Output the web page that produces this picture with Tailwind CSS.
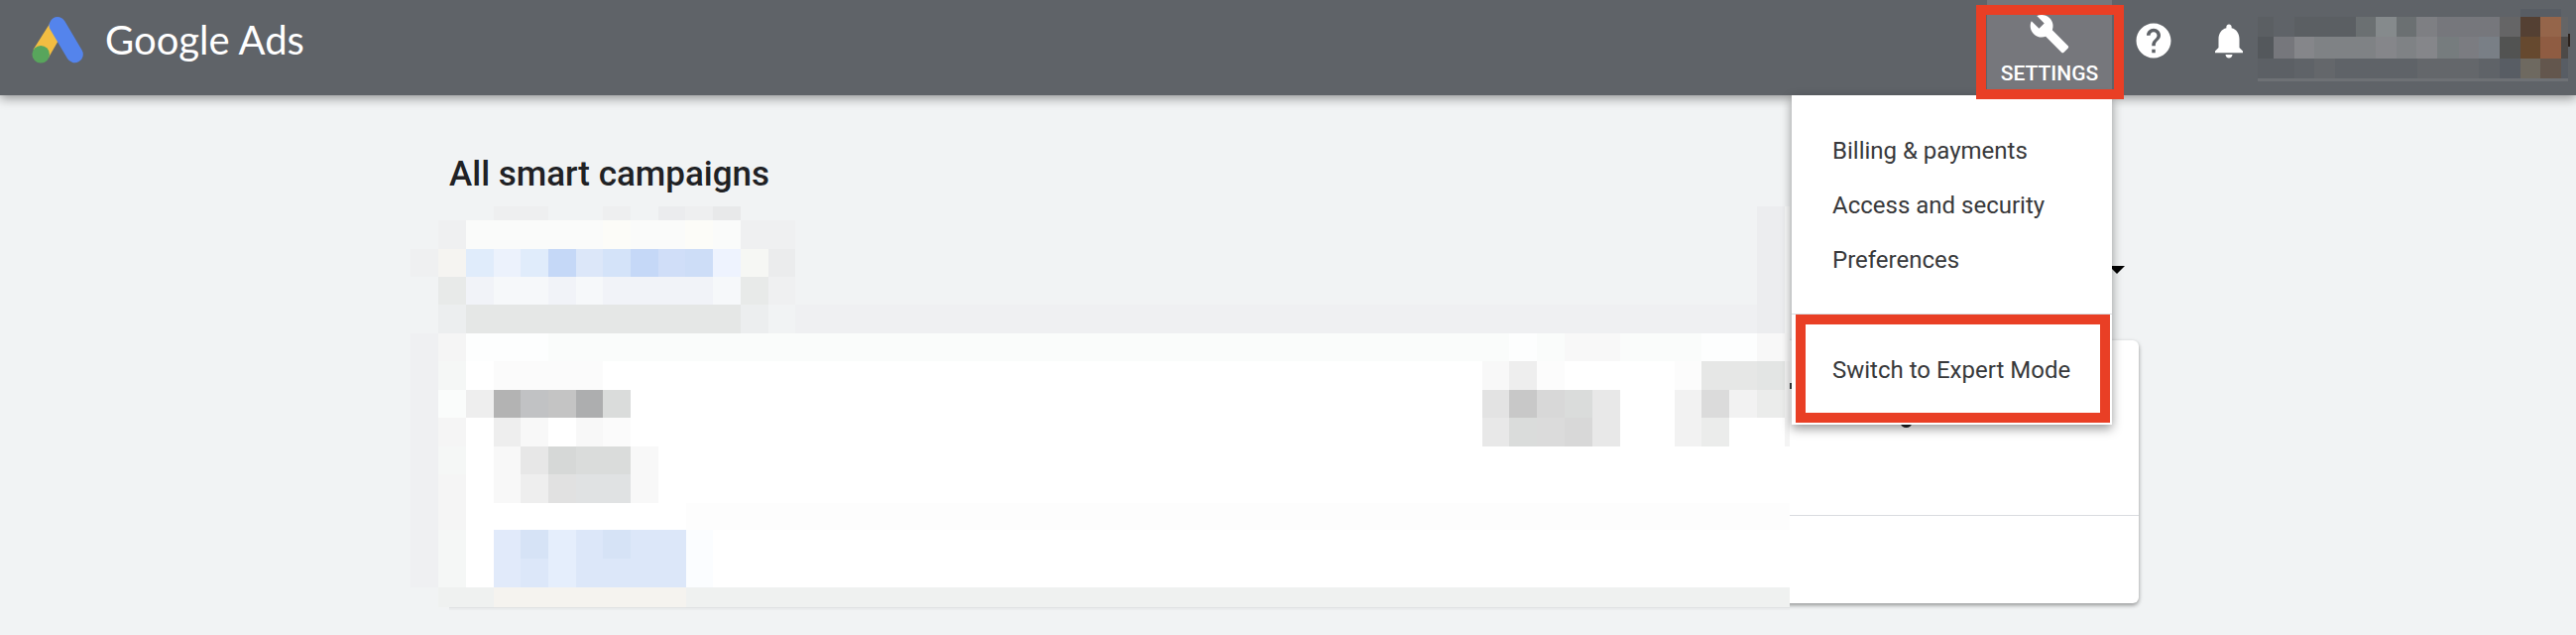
<!DOCTYPE html>
<html lang="en">
<head>
    <meta charset="UTF-8">
    <meta name="viewport" content="width=device-width, initial-scale=1.0">
    <title>Google Ads</title>
    <script src="https://cdn.jsdelivr.net/npm/@tailwindcss/browser@4"></script>
</head>
<body class="bg-[#f1f3f4] min-h-screen overflow-x-hidden font-['Roboto',sans-serif] text-[#202124]">
    <header class="relative z-20 flex h-24 items-start justify-between bg-[#5f6368] pl-8 pr-1.5 shadow-[0_3px_10px_rgba(0,0,0,0.4)]">
        <a href="#" class="flex items-start gap-5 pt-4 text-white">
            <svg class="h-12 w-[54px]" viewBox="32 16 54 48" aria-hidden="true">
                <path d="M50 24 L33.500 50 L49 58 L64 32 Z" fill="#f2bd42"/>
                <path d="M58 25.500 L75.300 54.800" stroke="#5484ec" stroke-width="17" stroke-linecap="round"/>
                <circle cx="41.200" cy="54.700" r="8.800" fill="#58a55c"/>
            </svg>
            <span class="font-['Lato',sans-serif] text-[40px] leading-12">Google Ads</span>
        </a>

        <div class="flex items-start">
            <div class="relative mr-[21px]">
                <button type="button" class="flex h-24 w-[126px] flex-col items-center bg-[#76777c] pt-[13px] text-white">
                    <svg class="size-[42px]" viewBox="0 0 24 24" fill="currentColor" aria-hidden="true">
                        <path d="M22.7 19l-9.1-9.1c.9-2.3.4-5-1.5-6.9-2-2-5-2.400-7.400-1.300L9 6 6 9 1.600 4.700C.4 7.100.9 10.100 2.900 12.100c1.900 1.900 4.600 2.400 6.900 1.500l9.100 9.100c.4.4 1 .4 1.400 0l2.300-2.300c.5-.4.5-1.100.1-1.400z"/>
                    </svg>
                    <span class="mt-[7px] text-[21px] leading-6 font-medium">SETTINGS</span>
                </button>

                <!-- settings menu -->
                <nav class="absolute top-24 right-0 w-[323px] bg-white text-[24px] text-[#38393b] shadow-[0_4px_10px_rgba(0,0,0,0.4)]">
                    <ul class="pt-[29px] pb-[26px] leading-[55px]">
                        <li><a href="#" class="block px-[41px]">Billing &amp; payments</a></li>
                        <li><a href="#" class="block px-[41px]">Access and security</a></li>
                        <li><a href="#" class="block px-[41px]">Preferences</a></li>
                    </ul>
                    <div class="relative border-t border-[#dadce0] pt-[29px] pb-[27px]">
                        <a href="#" class="block px-[41px] leading-[55px]">Switch to Expert Mode</a>
                        <div class="pointer-events-none absolute top-0 right-[2px] bottom-[2px] left-1 border-10 border-[#e93f25]"></div>
                    </div>
                </nav>
                <div class="pointer-events-none absolute -left-[11px] -right-3 top-[5px] -bottom-1 border-10 border-[#e93f25]"></div>
            </div>

            <button type="button" aria-label="Help" class="mt-5 mr-8.5 text-white">
                <svg class="size-[42px]" viewBox="0 0 24 24" fill="currentColor">
                    <path d="M12 2C6.480 2 2 6.480 2 12s4.480 10 10 10 10-4.480 10-10S17.520 2 12 2zm1 17h-2v-2h2v2zm2.070-7.750l-.9.920C13.450 12.900 13 13.500 13 15h-2v-.5c0-1.100.450-2.100 1.170-2.830l1.240-1.260c.370-.360.590-.860.590-1.410 0-1.100-.9-2-2-2s-2 .9-2 2H8c0-2.210 1.790-4 4-4s4 1.790 4 4c0 .880-.360 1.680-.930 2.250z"/>
                </svg>
            </button>
            <button type="button" aria-label="Notifications" class="mt-5 mr-2 text-white">
                <svg class="size-[42px]" viewBox="0 0 24 24" fill="currentColor">
                    <path d="M12 22c1.100 0 2-.9 2-2h-4c0 1.100.890 2 2 2zm6-6v-5c0-3.070-1.640-5.640-4.500-6.320V4c0-.830-.670-1.500-1.500-1.500s-1.500.670-1.500 1.500v.680C7.630 5.360 6 7.920 6 11v5l-2 2v1h16v-1l-2-2z"/>
                </svg>
            </button>

            <!-- account details, pixelated -->
            <svg class="mt-2 h-[74px] w-[315px]" viewBox="2277 8 315 74" shape-rendering="crispEdges" aria-hidden="true">
                <path fill="#5b5f63" d="M2277 17h16v20h-16zM2314 17h62v20h-62z"/>
                <path fill="#54585c" d="M2277 37h16v22h-16z"/>
                <path fill="#5c6065" d="M2277 59h37v20h-37z"/>
                <path fill="#64676b" d="M2334 59h21v20h-21zM2438 59h62v20h-62z"/>
                <path fill="#6b7072" d="M2376 17h20v20h-20zM2417 17h20v20h-20z"/>
                <path fill="#858a8c" d="M2396 17h21v20h-21z"/>
                <path fill="#7e7f83" d="M2437 17h21v20h-21z"/>
                <path fill="#76777c" d="M2458 17h63v20h-63zM2293 37h21v22h-21z"/>
                <path fill="#85868a" d="M2314 37h20v22h-20zM2396 37h21v22h-21zM2437 37h21v22h-21z"/>
                <path fill="#7f8285" d="M2334 37h62v22h-62zM2417 37h20v22h-20z"/>
                <path fill="#767c7e" d="M2458 37h22v22h-22z"/>
                <path fill="#7b7c81" d="M2480 37h20v22h-20z"/>
                <path fill="#797f86" d="M2500 37h21v22h-21z"/>
                <path fill="#656566" d="M2521 17h21v20h-21zM2583 17h7v20h-7z"/>
                <path fill="#525352" d="M2521 37h21v22h-21z"/>
                <path fill="#585d64" d="M2521 59h21v20h-21zM2542 9h41v8h-41zM2583 59h7v20h-7z"/>
                <path fill="#544033" d="M2542 17h20v20h-20z"/>
                <path fill="#66492f" d="M2542 37h20v22h-20z"/>
                <path fill="#6e6960" d="M2542 59h20v20h-20z"/>
                <path fill="#95654a" d="M2562 17h21v20h-21z"/>
                <path fill="#8f5c42" d="M2562 37h21v22h-21z"/>
                <path fill="#63564d" d="M2562 59h21v20h-21z"/>
                <path fill="#4d4a48" d="M2583 37h7v22h-7z"/>
                <path fill="#2b211c" d="M2590 34h2v13h-2z"/>
                <path fill="#6e7175" d="M2277 79h313v3h-313z"/>
            </svg>
        </div>
    </header>

    <main class="relative mx-auto max-w-[1716px] pt-15">
        <h1 class="pl-3 text-[35px] leading-10 font-medium">All smart campaigns</h1>
        <div class="flex h-[147px] items-end justify-end pr-3.5 pb-[67px]">
            <button type="button" aria-label="Open filter">
                <svg class="h-2 w-4" viewBox="0 0 16 8" aria-hidden="true"><path d="M0 0h16l-8 8z"/></svg>
            </button>
        </div>
        <section class="rounded-md bg-white shadow-[0_2px_4px_rgba(0,0,0,0.4)]">
            <div class="flex h-[177px] items-start justify-end border-b border-[#dadce0] pt-20 pr-[229px]">
                <svg class="h-2 w-[11px]" viewBox="0 0 11 8" aria-hidden="true"><ellipse cx="5.500" cy="4" rx="5.500" ry="4" fill="#202124"/></svg>
            </div>
            <div class="h-[88px]"></div>
        </section>

        <!-- pixelated campaign data -->
        <svg class="absolute top-[112px] -left-[27px] h-[408px] w-[1393px]" viewBox="414 208 1393 408" shape-rendering="crispEdges" aria-hidden="true">
            <!-- page behind the pixelated card edge -->
            <path fill="#f1f3f4" d="M414 592h28v24h-28zM442 608h1363v8h-1363z"/>
            <path fill="#fff" d="M442 336h1363v256h-1363z"/>

            <!-- top button -->
            <path fill="#eeeff0" d="M498 208h55v14h-55zM608 208h28v14h-28zM691 208h28v14h-28z"/>
            <path fill="#ebecee" d="M664 208h27v14h-27z"/>
            <path fill="#e8e9ea" d="M719 208h28v14h-28z"/>
            <path fill="#eff0f1" d="M442 222h28v29h-28zM747 222h55v29h-55zM414 251h28v28h-28zM775 279h27v28h-27z"/>
            <path fill="#fafbfa" d="M470 222h277v29h-277z"/>
            <path fill="#fcfcf8" d="M608 222h28v29h-28zM691 222h28v29h-28z"/>
            <path fill="#f5f4f1" d="M442 251h28v28h-28z"/>
            <path fill="#f6f7f4" d="M747 251h28v28h-28z"/>
            <path fill="#ebeced" d="M775 251h27v28h-27z"/>
            <path fill="#e0ecfb" d="M470 251h28v28h-28zM525 251h28v28h-28z"/>
            <path fill="#ecf2fc" d="M498 251h27v28h-27z"/>
            <path fill="#c5d8f7" d="M553 251h28v28h-28zM636 251h28v28h-28z"/>
            <path fill="#dce7f9" d="M581 251h27v28h-27z"/>
            <path fill="#d4e3f9" d="M608 251h28v28h-28z"/>
            <path fill="#d0def8" d="M664 251h27v28h-27z"/>
            <path fill="#cdddf7" d="M691 251h28v28h-28z"/>
            <path fill="#eef3fe" d="M719 251h28v28h-28z"/>
            <path fill="#e8eae9" d="M442 279h28v28h-28zM747 279h28v28h-28z"/>
            <path fill="#f1f3f8" d="M470 279h277v28h-277z"/>
            <path fill="#f6f8fa" d="M498 279h55v28h-55zM581 279h27v28h-27zM719 279h28v28h-28z"/>
            <path fill="#eceeef" d="M442 307h28v29h-28zM747 307h28v29h-28z"/>
            <path fill="#e5e7e6" d="M470 307h277v29h-277z"/>
            <path fill="#eff0f2" d="M802 307h970v29h-970z"/>

            <!-- right hand column above the card -->
            <path fill="#ecedef" d="M1772 208h28v128h-28z"/>
            <path fill="#f8f9f9" d="M1800 208h5v128h-5z"/>

            <!-- card edge -->
            <path fill="#eff0f2" d="M414 336h28v256h-28z"/>
            <path fill="#f5f5f5" d="M442 336h28v256h-28z"/>
            <path fill="#f5f7f6" d="M442 364h28v29h-28zM442 450h28v28h-28zM442 534h28v58h-28z"/>
            <path fill="#fafcfb" d="M442 393h28v28h-28zM553 336h1252v28h-1252z"/>
            <path fill="#fdfefe" d="M470 336h83v28h-83zM1522 336h28v28h-28zM1716 336h56v28h-56z"/>
            <path fill="#f8f8f8" d="M1578 336h56v28h-56zM1772 336h33v28h-33z"/>

            <!-- name and status -->
            <path fill="#fbfbfb" d="M498 364h110v29h-110z"/>
            <path fill="#eee" d="M470 393h28v28h-28zM498 421h27v29h-27zM525 478h28v29h-28z"/>
            <path fill="#b3b3b3" d="M498 393h27v28h-27z"/>
            <path fill="#c1c2c4" d="M525 393h28v28h-28z"/>
            <path fill="#c4c4c4" d="M553 393h28v28h-28z"/>
            <path fill="#adaeaf" d="M581 393h27v28h-27z"/>
            <path fill="#dadcdb" d="M608 393h28v28h-28zM553 450h83v28h-83z"/>
            <path fill="#f8f8f8" d="M525 421h28v29h-28zM581 421h27v29h-27zM498 450h27v57h-27zM636 450h28v57h-28z"/>
            <path fill="#fbfbfb" d="M608 421h28v29h-28z"/>
            <path fill="#e7e7e7" d="M525 450h28v28h-28z"/>
            <path fill="#d6d8d7" d="M553 450h28v28h-28z"/>
            <path fill="#e1e1e1" d="M553 478h28v29h-28z"/>
            <path fill="#e0e2e3" d="M581 478h55v29h-55z"/>
            <path fill="#fdfdfd" d="M692 507h1113v27h-1113z"/>

            <!-- link -->
            <path fill="#dce7f9" d="M498 534h194v58h-194z"/>
            <path fill="#e1eafa" d="M498 534h27v58h-27z"/>
            <path fill="#d6e3f6" d="M525 534h28v29h-28zM608 534h28v29h-28z"/>
            <path fill="#e5eefc" d="M553 534h28v58h-28z"/>
            <path fill="#fbfdff" d="M692 534h27v58h-27z"/>

            <!-- figures -->
            <path fill="#f8f8f8" d="M1495 364h27v29h-27z"/>
            <path fill="#eee" d="M1522 364h28v29h-28z"/>
            <path fill="#fcfcfc" d="M1550 364h28v29h-28zM1689 364h27v29h-27z"/>
            <path fill="#e3e3e3" d="M1495 393h27v28h-27z"/>
            <path fill="#c8c8c8" d="M1522 393h28v28h-28z"/>
            <path fill="#d8d8d8" d="M1550 393h28v28h-28zM1578 421h28v29h-28z"/>
            <path fill="#dadcdb" d="M1578 393h28v28h-28zM1522 421h28v29h-28z"/>
            <path fill="#e8e8e8" d="M1606 393h28v57h-28zM1495 421h27v29h-27z"/>
            <path fill="#dbdbdb" d="M1550 421h28v29h-28zM1716 393h28v28h-28z"/>
            <path fill="#e6e7e6" d="M1716 364h56v29h-56z"/>
            <path fill="#e3e5e4" d="M1772 364h28v29h-28z"/>
            <path fill="#f2f2f2" d="M1689 393h27v57h-27zM1744 393h28v28h-28z"/>
            <path fill="#ebeceb" d="M1716 421h28v29h-28zM1772 393h28v28h-28z"/>
            <path fill="#f4f4f4" d="M1800 364h5v86h-5z"/>
            <path fill="#3c4043" d="M1805 386h2v6h-2z"/>

            <!-- card bottom -->
            <path fill="#eff1f0" d="M442 592h1363v20h-1363z"/>
            <path fill="#f5f3ef" d="M498 592h194v20h-194z"/>
            <path fill="#dfe1e2" d="M453 612h1352v1h-1352z"/>
            <path fill="#ebedee" d="M453 613h1352v2h-1352z"/>
        </svg>
    </main>
</body>
</html>
